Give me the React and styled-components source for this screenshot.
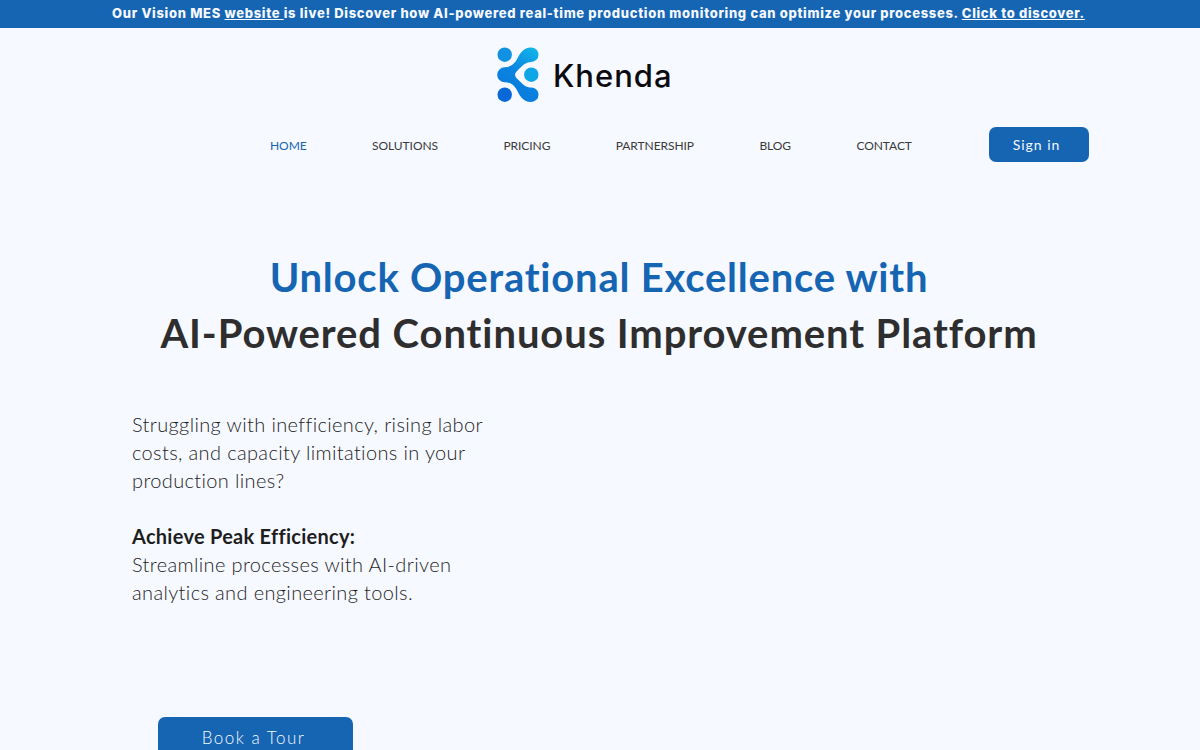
import React from 'react';
import styled, { createGlobalStyle } from 'styled-components';

const GlobalStyle = createGlobalStyle`
  html, body {
    margin: 0;
    padding: 0;
    height: 750px;
    overflow: hidden;
    background: #f6f9ff;
    font-family: 'Lato', 'Liberation Sans', sans-serif;
    color: #2f2e2e;
  }
`;

const Page = styled.div`
  width: 1200px;
  height: 750px;
  overflow: hidden;
`;

const Banner = styled.div`
  height: 28px;
  padding-right: 3px;
  background: #1565b3;
  color: #f6f9ff;
  font-family: 'Inter', sans-serif;
  font-size: 13px;
  font-weight: 800;
  letter-spacing: 0.68px;
  line-height: 27px;
  text-align: center;
  white-space: nowrap;

  & a {
    color: inherit;
    text-decoration: underline;
  }
`;

const LogoRow = styled.div`
  display: flex;
  align-items: center;
  gap: 7px;
  height: 66px;
  margin-top: 14px;
  padding-left: 492px;
`;

const LogoText = styled.span`
  font-family: 'Inter', sans-serif;
  font-size: 31px;
  font-weight: 500;
  color: #0b0b0f;
  letter-spacing: 1px;
`;

const NavBar = styled.nav`
  display: flex;
  align-items: center;
  margin-top: 19px;
  padding-left: 270px;
  height: 35px;
`;

const NavLinks = styled.div`
  display: flex;
  gap: 65.4px;
  width: 719px;
  padding-top: 2px;
`;

const NavItem = styled.a`
  font-family: 'Lato', sans-serif;
  font-size: 12px;
  letter-spacing: -0.06px;
  color: ${(p) => (p.$active ? '#1565b3' : '#3a3a3a')};
`;

const SignIn = styled.button`
  width: 100px;
  height: 35px;
  border: none;
  border-radius: 7px;
  background: #1565b3;
  color: #f6f9ff;
  font-family: 'Lato', sans-serif;
  font-size: 14px;
  letter-spacing: 1px;
  padding: 0 5px 0 0;
`;

const Hero = styled.header`
  margin-top: 87px;
  text-align: center;
  font-size: 40px;
  font-weight: 700;
  line-height: 56px;
  padding-right: 2px;
`;

const HeroLine = styled.div`
  color: ${(p) => (p.$accent ? '#1565b3' : '#2f2e2e')};
  letter-spacing: ${(p) => (p.$accent ? '0.78px' : '0.9px')};
`;

const Copy = styled.div`
  margin-top: 49px;
  margin-left: 132px;
  width: 370px;
  color: #1f1e1e;
  font-size: 20px;
  line-height: 28px;
  font-weight: 300;
  letter-spacing: 0.36px;
`;

const Paragraph = styled.p`
  margin: 0 0 28px;
`;

const Strong = styled.strong`
  font-weight: 700;
  letter-spacing: 0.27px;
`;

const TourButton = styled.button`
  display: block;
  margin: 111px 0 0 158px;
  width: 195px;
  height: 50px;
  border: none;
  border-radius: 7px;
  background: #1565b3;
  color: #f6f9ff;
  font-family: 'Lato', sans-serif;
  font-size: 17px;
  font-weight: 300;
  letter-spacing: 1.5px;
  padding: 0 4px 10px 0;
`;

const Logo = () => (
  <svg width="54" height="66" viewBox="0 0 54 66" aria-hidden="true">
    <defs>
      <linearGradient id="khShape" x1="0.9" y1="0" x2="0.4" y2="1">
        <stop offset="0" stopColor="#12b6ea" />
        <stop offset="0.5" stopColor="#0a86e0" />
        <stop offset="1" stopColor="#0a78dc" />
      </linearGradient>
    </defs>
    <circle cx="12.7" cy="12.7" r="7.2" fill="#1290e2" />
    <circle cx="39.3" cy="32.7" r="7.2" fill="#0ea6e6" />
    <circle cx="12.7" cy="52.7" r="7.2" fill="#0868d8" />
    <path
      fill="url(#khShape)"
      d="M12.7 25.2C18 25.2 21 23 24 19C27.5 13 30 5.5 39.3 5.5A7.2 7.2 0 1 1 39.3 19.9C34 19.9 31 23 28 26C25 29 23 30.5 23 32.7C23 35 25 36.5 28 39.4C31 42.4 34 45.5 39.3 45.5A7.2 7.2 0 1 1 39.3 59.9C30 59.9 27.5 52.4 24 46.4C21 42.4 18 40.2 12.7 40.2A7.5 7.5 0 0 1 12.7 25.2Z"
    />
  </svg>
);

const navItems = ['HOME', 'SOLUTIONS', 'PRICING', 'PARTNERSHIP', 'BLOG', 'CONTACT'];

export default function App() {
  return (
    <Page>
      <GlobalStyle />
      <Banner>
        Our Vision MES <a href="#w">website </a> is live! Discover how AI-powered real-time production monitoring can optimize your processes. <a href="#d">Click to discover.</a>
      </Banner>
      <LogoRow>
        <Logo />
        <LogoText>Khenda</LogoText>
      </LogoRow>
      <NavBar>
        <NavLinks>
          {navItems.map((item, i) => (
            <NavItem key={item} $active={i === 0}>{item}</NavItem>
          ))}
        </NavLinks>
        <SignIn>Sign in</SignIn>
      </NavBar>
      <Hero>
        <HeroLine $accent>Unlock Operational Excellence with</HeroLine>
        <HeroLine>AI-Powered Continuous Improvement Platform</HeroLine>
      </Hero>
      <Copy>
        <Paragraph>Struggling with inefficiency, rising labor costs, and capacity limitations in your production lines?</Paragraph>
        <Strong>Achieve Peak Efficiency:</Strong>
        <br />
        Streamline processes with AI-driven analytics and engineering tools.
      </Copy>
      <TourButton>Book a Tour</TourButton>
    </Page>
  );
}
